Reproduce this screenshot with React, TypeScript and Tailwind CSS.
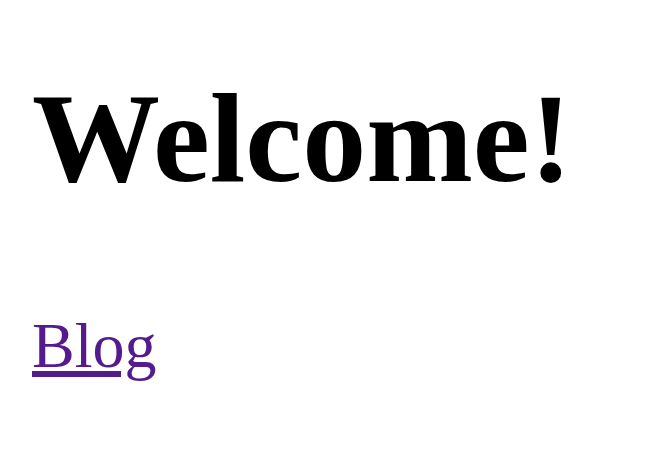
import React from 'react'

const App: React.FC = () => {
  return (
    <div className="min-h-[456px] bg-white px-[32px] pt-[42px] font-['Liberation_Serif',serif] text-black">
      <h1 className="text-[128px] font-bold leading-normal">Welcome!</h1>
      <p className="mt-[64px] text-[64px] leading-normal">
        <a href="#" className="text-[#551a8b] underline">Blog</a>
      </p>
    </div>
  )
}

export default App
